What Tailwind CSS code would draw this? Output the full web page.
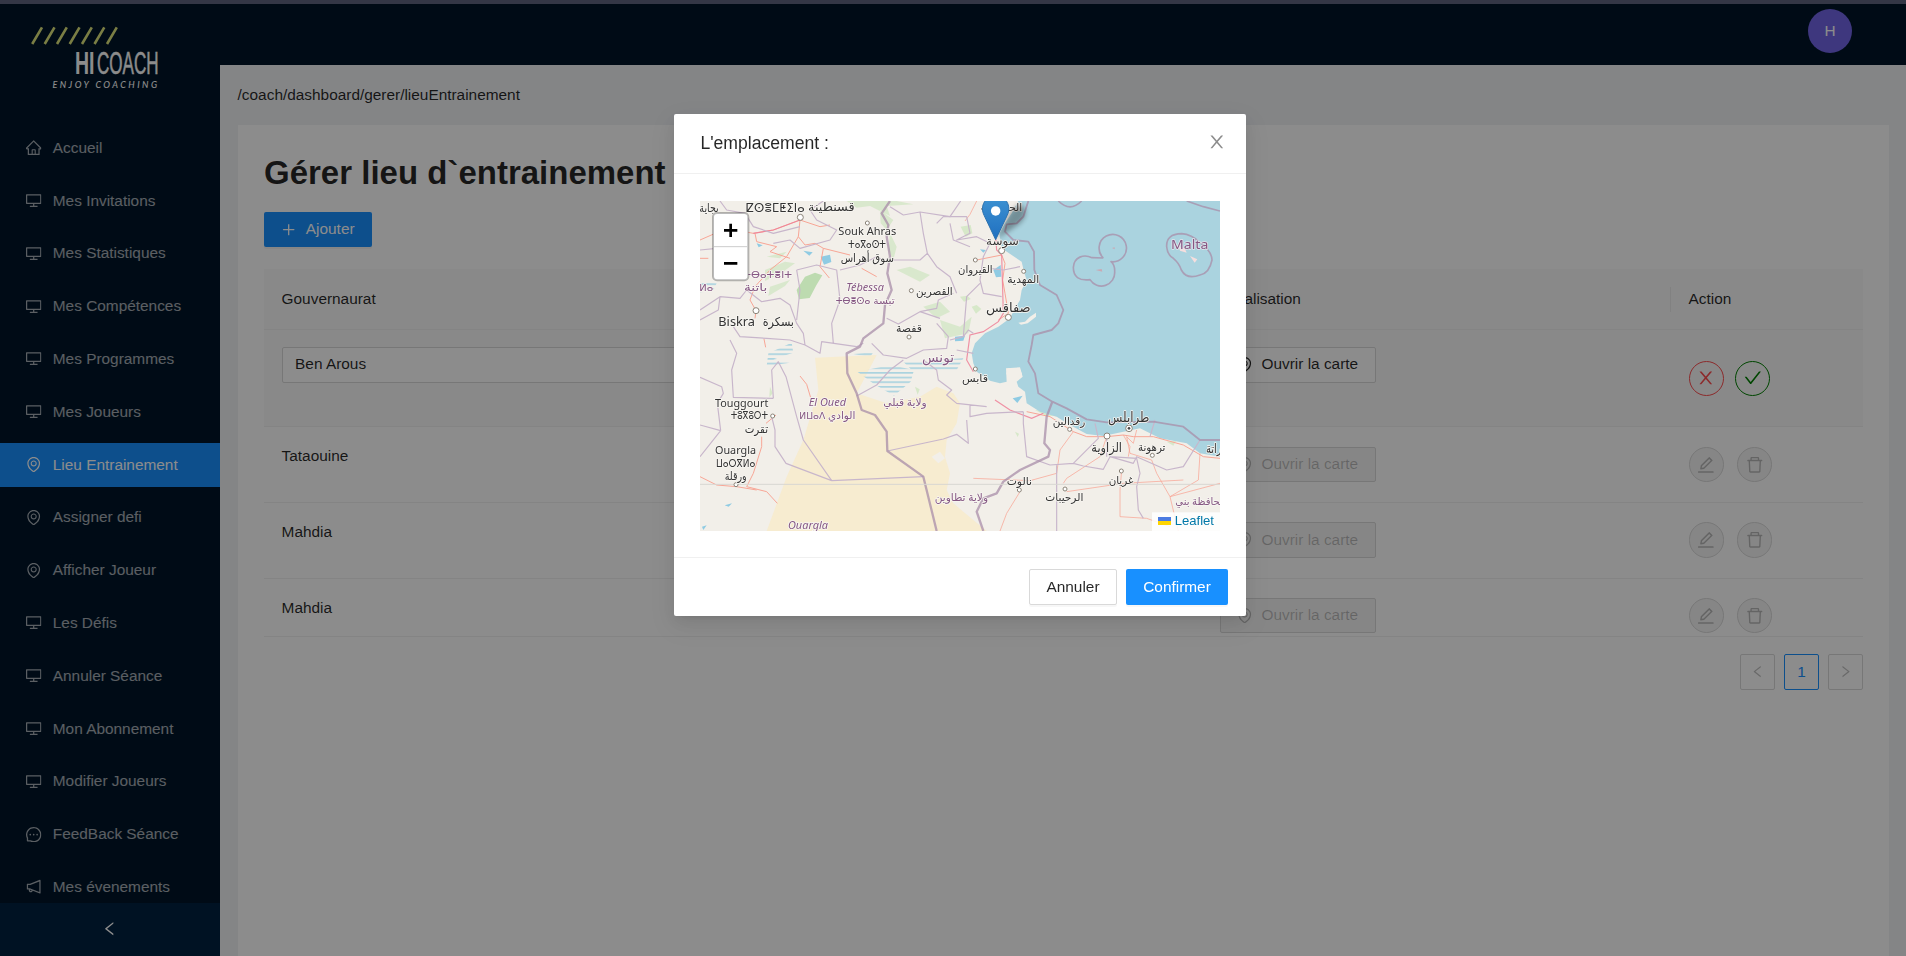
<!DOCTYPE html>
<html lang="fr">
<head>
<meta charset="utf-8">
<title>HiCoach</title>
<script src="https://cdn.jsdelivr.net/npm/@tailwindcss/browser@4"></script>
</head>
<body class="h-[956px] overflow-hidden bg-[#f0f2f5] font-['Liberation_Sans',Arial,sans-serif] text-[15.4px] leading-[24.2px] text-black/85">
<svg class="hidden">
  <symbol id="close" viewBox="64 64 896 896"><path d="M563.8 512l262.5-312.9c4.4-5.2.7-13.1-6.1-13.1h-79.8c-4.7 0-9.2 2.1-12.3 5.7L511.6 449.8 295.1 191.7c-3-3.6-7.5-5.7-12.3-5.7H203c-6.8 0-10.5 7.9-6.1 13.1L459.4 512 196.9 824.9A7.95 7.95 0 00203 838h79.8c4.7 0 9.2-2.1 12.3-5.7l216.5-258.1 216.5 258.1c3 3.6 7.5 5.7 12.3 5.7h79.8c6.8 0 10.5-7.9 6.1-13.1L563.8 512z"/></symbol>
  <symbol id="check" viewBox="64 64 896 896"><path d="M912 190h-69.9c-9.8 0-19.1 4.5-25.1 12.2L404.7 724.5 207 474a32 32 0 00-25.1-12.2H112c-6.7 0-10.4 7.7-6.3 12.9l273.9 347c12.8 16.2 37.4 16.2 50.3 0l488.4-618.9c4.1-5.1.4-12.8-6.3-12.8z"/></symbol>
  <symbol id="left" viewBox="64 64 896 896"><path d="M724 218.3V141c0-6.7-7.7-10.4-12.9-6.3L260.3 486.8a31.86 31.86 0 000 50.3l450.8 352.1c5.3 4.1 12.9.4 12.9-6.3v-77.3c0-4.9-2.3-9.6-6.1-12.6l-360-281 360-281.1c3.8-3 6.1-7.7 6.1-12.6z"/></symbol>
  <symbol id="right" viewBox="64 64 896 896"><path d="M765.7 486.8L314.9 134.7A7.97 7.97 0 00302 141v77.3c0 4.9 2.3 9.6 6.1 12.6l360 281.1-360 281.1c-3.9 3-6.1 7.7-6.1 12.6V883c0 6.7 7.7 10.4 12.9 6.3l450.8-352.1a31.96 31.96 0 000-50.4z"/></symbol>
  <symbol id="desktop" viewBox="64 64 896 896"><path d="M928 140H96c-17.7 0-32 14.3-32 32v496c0 17.7 14.3 32 32 32h380v112H304c-8.8 0-16 7.2-16 16v48c0 4.4 3.6 8 8 8h432c4.4 0 8-3.6 8-8v-48c0-8.8-7.2-16-16-16H548V700h380c17.7 0 32-14.3 32-32V172c0-17.7-14.3-32-32-32zm-40 488H136V212h752v416z"/></symbol>
  <symbol id="pin" viewBox="64 64 896 896"><path d="M854.6 289.1a362.49 362.49 0 00-79.9-115.7 370.83 370.83 0 00-118.2-77.8C610.7 76.6 562.1 67 512 67c-50.1 0-98.7 9.6-144.5 28.5-44.3 18.3-84 44.5-118.2 77.8A363.6 363.6 0 00169.4 289c-19.5 45-29.4 92.8-29.4 142 0 70.6 16.9 140.9 50.1 208.7 26.7 54.5 64 107.6 111 158.1 80.3 86.2 164.5 138.9 188.4 153a43.9 43.9 0 0022.4 6.1c7.8 0 15.5-2 22.4-6.1 23.9-14.1 108.1-66.8 188.4-153 47-50.4 84.3-103.6 111-158.1C867.1 572 884 501.8 884 431.1c0-49.2-9.9-97-29.4-142zM512 880.2c-65.9-41.9-300-207.8-300-449.1 0-77.9 31.1-151.1 87.6-206.3C356.3 169.5 431.7 139 512 139s155.7 30.5 212.4 85.9C780.9 280 812 353.2 812 431.1c0 241.3-234.1 407.2-300 449.1zm0-617.2c-97.2 0-176 78.8-176 176s78.8 176 176 176 176-78.8 176-176-78.8-176-176-176zm79.2 255.2A111.6 111.6 0 01512 551c-29.9 0-58-11.7-79.2-32.8A111.6 111.6 0 01400 439c0-29.9 11.7-58 32.8-79.2A111.6 111.6 0 01512 327c29.9 0 58 11.6 79.2 32.8A111.6 111.6 0 01624 439c0 29.9-11.7 58-32.8 79.2z"/></symbol>
  <symbol id="home" viewBox="64 64 896 896"><path d="M946.5 505L560.1 118.8l-25.9-25.9a31.5 31.5 0 00-44.4 0L77.5 505a63.9 63.9 0 00-18.8 46c.4 35.2 29.7 63.3 64.9 63.3h42.5V940h691.8V614.3h43.4c17.1 0 33.2-6.7 45.3-18.8a63.6 63.6 0 0018.7-45.3c0-17-6.7-33.1-18.8-45.2zM568 868H456V664h112v204zm217.9-325.7V868H632V640c0-22.1-17.9-40-40-40H432c-22.1 0-40 17.9-40 40v228H238.1V542.3h-96l370-369.7 23.1 23.1L882 542.3h-96.1z"/></symbol>
  <symbol id="message" viewBox="64 64 896 896"><path d="M464 512a48 48 0 1096 0 48 48 0 10-96 0zm200 0a48 48 0 1096 0 48 48 0 10-96 0zm-400 0a48 48 0 1096 0 48 48 0 10-96 0zm661.2-173.6c-22.6-53.7-55-101.9-96.3-143.3a444.35 444.35 0 00-143.3-96.3C630.6 75.7 572.2 64 512 64h-2c-60.6.3-119.3 12.3-174.5 35.9a445.35 445.35 0 00-142 96.5c-40.9 41.3-73 89.3-95.2 142.8-23 55.4-34.6 114.3-34.3 174.9A449.4 449.4 0 00112 714v152a46 46 0 0046 46h152.1A449.4 449.4 0 00510 960h2.1c59.9 0 118-11.6 172.7-34.3a444.48 444.48 0 00142.8-95.2c41.3-40.9 73.8-88.7 96.5-142 23.6-55.2 35.6-113.9 35.9-174.5.3-60.9-11.5-120-34.8-175.6zm-151.1 438C704 845.8 611 884 512 884h-1.7c-60.3-.3-120.2-15.3-173.1-43.5l-8.4-4.5H188V695.2l-4.5-8.4C155.3 633.9 140.3 574 140 513.7c-.4-99.7 37.7-193.3 107.6-263.8 69.8-70.5 163.1-109.5 262.8-109.9h1.7c50 0 98.5 9.7 144.2 28.9 44.6 18.7 84.6 45.6 119 80 34.3 34.3 61.3 74.4 80 119 19.4 46.2 29.1 95.2 28.9 145.8-.6 99.6-39.7 192.9-110.1 262.7z"/></symbol>
  <symbol id="horn" viewBox="64 64 896 896"><path d="M880 112c-3.8 0-7.7.7-11.6 2.3L292 345.9H128c-8.8 0-16 7.4-16 16.6v299c0 9.2 7.2 16.6 16 16.6h101.7c-3.7 11.6-5.7 23.9-5.7 36.4 0 65.9 53.8 119.5 120 119.5 55.4 0 102.1-37.6 115.9-88.4l408.6 164.2c3.9 1.5 7.8 2.3 11.6 2.3 16.9 0 32-14.2 32-33.2V145.2C912 126.2 897 112 880 112zM344 762.3c-26.5 0-48-21.4-48-47.8 0-11.2 3.9-21.9 11-30.4l84.9 34.1c-2 24.6-22.7 44.1-47.9 44.1zm496 58.4L318.8 611.3l-12.9-5.2H184V417.9h121.9l12.9-5.2L840 203.3v617.4z"/></symbol>
  <symbol id="plus" viewBox="64 64 896 896"><path d="M482 192h60q8 0 8 8v624q0 8-8 8h-60q-8 0-8-8V200q0-8 8-8z"/><path d="M200 474h624q8 0 8 8v60q0 8-8 8H200q-8 0-8-8v-60q0-8 8-8z"/></symbol>
  <symbol id="edit" viewBox="64 64 896 896"><path d="M257.7 752c2 0 4-.2 6-.5L431.9 722c2-.4 3.9-1.3 5.3-2.8l423.9-423.9a9.96 9.96 0 000-14.1L694.9 114.9c-1.9-1.9-4.4-2.9-7.1-2.9s-5.2 1-7.1 2.9L256.8 538.8c-1.5 1.5-2.4 3.3-2.8 5.3l-29.5 168.2a33.5 33.5 0 009.4 29.8c6.6 6.4 14.9 9.9 23.8 9.9zm67.4-174.4L687.8 215l73.3 73.3-362.7 362.6-88.9 15.7 15.6-89zM880 836H144c-17.7 0-32 14.3-32 32v36c0 4.4 3.6 8 8 8h784c4.4 0 8-3.6 8-8v-36c0-17.7-14.3-32-32-32z"/></symbol>
  <symbol id="trash" viewBox="64 64 896 896"><path d="M360 184h-8c4.4 0 8-3.6 8-8v8h304v-8c0 4.4 3.6 8 8 8h-8v72h72v-80c0-35.3-28.7-64-64-64H352c-35.3 0-64 28.7-64 64v80h72v-72zm504 72H160c-17.7 0-32 14.3-32 32v32c0 4.4 3.6 8 8 8h60.4l24.7 523c1.6 34.1 29.8 61 63.9 61h454c34.2 0 62.3-26.8 63.9-61l24.7-523H888c4.4 0 8-3.6 8-8v-32c0-17.7-14.3-32-32-32zM731.3 840H292.7l-24.2-512h487l-24.2 512z"/></symbol>
</svg>

<div class="flex h-full">
  <!-- Sidebar -->
  <aside class="flex w-[220px] shrink-0 flex-col bg-[#001529] text-white/65">
    <svg class="h-[122px] w-[220px] shrink-0" viewBox="0 0 220 122">
      <g stroke="#dfe67d" stroke-width="2.6"><path d="M32.2 44L42 27.3M44.7 44L54.5 27.3M57 44L66.8 27.3M69.7 44L79.5 27.3M82 44L91.8 27.3M94.5 44L104.3 27.3M107 44L116.8 27.3"/></g>
      <g fill="#fff" font-family="'Liberation Sans Narrow','Liberation Sans',sans-serif">
        <text x="75" y="73.5" font-size="31" font-weight="700" textLength="19.5" lengthAdjust="spacingAndGlyphs">HI</text>
        <text x="97" y="73.5" font-size="31" stroke="#fff" stroke-width=".5" textLength="61.5" lengthAdjust="spacingAndGlyphs">COACH</text>
      </g>
      <text x="52.5" y="87.6" fill="#fff" font-family="Lato,sans-serif" font-weight="500" font-style="italic" font-size="9" textLength="104.5" lengthAdjust="spacing">ENJOY COACHING</text>
    </svg>
    <nav class="flex min-h-0 flex-1 flex-col gap-[8.8px] overflow-hidden pt-[3.9px] *:flex *:h-[44px] *:shrink-0 *:items-center *:gap-[11px] *:pl-[26.4px] [&_svg]:size-[15.4px] [&_svg]:fill-current">
      <a><svg><use href="#home"/></svg>Accueil</a>
      <a><svg><use href="#desktop"/></svg>Mes Invitations</a>
      <a><svg><use href="#desktop"/></svg>Mes Statistiques</a>
      <a><svg><use href="#desktop"/></svg>Mes Compétences</a>
      <a><svg><use href="#desktop"/></svg>Mes Programmes</a>
      <a><svg><use href="#desktop"/></svg>Mes Joueurs</a>
      <a class="bg-[#1890ff] text-white"><svg><use href="#pin"/></svg>Lieu Entrainement</a>
      <a><svg><use href="#pin"/></svg>Assigner defi</a>
      <a><svg><use href="#pin"/></svg>Afficher Joueur</a>
      <a><svg><use href="#desktop"/></svg>Les Défis</a>
      <a><svg><use href="#desktop"/></svg>Annuler Séance</a>
      <a><svg><use href="#desktop"/></svg>Mon Abonnement</a>
      <a><svg><use href="#desktop"/></svg>Modifier Joueurs</a>
      <a><svg><use href="#message"/></svg>FeedBack Séance</a>
      <a><svg><use href="#horn"/></svg>Mes évenements</a>
    </nav>
    <div class="flex h-[53px] shrink-0 items-center justify-center bg-[#002140] pb-[2px] text-white"><svg class="size-[15.4px] fill-current"><use href="#left"/></svg></div>
  </aside>

  <div class="flex min-w-0 flex-1 flex-col">
    <header class="flex h-[65px] shrink-0 justify-end bg-[#001529] pt-[9px] pr-[54px]">
      <div class="flex size-[44px] items-center justify-center rounded-full bg-[#7265e6] text-white">H</div>
    </header>
    <div class="flex h-[60px] shrink-0 items-center pl-[17.6px]">/coach/dashboard/gerer/lieuEntrainement</div>
    <main class="mr-[17px] ml-[18px] flex-1 bg-white px-[26px] pt-[26px]">
      <h1 class="text-[33px] leading-[44px] font-bold">Gérer lieu d`entrainement</h1>
      <button class="mt-[17px] flex h-[35px] w-[108px] items-center justify-center gap-[9px] rounded-[2px] bg-[#1890ff] text-white shadow-[0_2px_0_rgba(0,0,0,0.045)]"><svg class="size-[15.4px] fill-current"><use href="#plus"/></svg>Ajouter</button>

      <div class="mt-[22px]">
        <div class="grid h-[60.5px] grid-cols-[938px_468px_194px] items-center border-b border-[#f0f0f0] bg-[#fafafa]">
          <div class="pl-[17.6px]">Gouvernaurat</div>
          <div class="pl-[17.6px]">Localisation</div>
          <div class="relative pl-[18.6px] before:absolute before:top-0 before:left-0 before:h-[25px] before:w-px before:bg-black/6">Action</div>
        </div>
        <div class="grid h-[97px] grid-cols-[938px_468px_194px] border-b border-[#f0f0f0] bg-[#fafafa] pt-[17px]">
          <div class="px-[17.6px]"><div class="flex h-[36px] items-center rounded-[2px] border border-[#d9d9d9] bg-white pl-[12.5px]">Ben Arous</div></div>
          <div class="pl-[17.6px]"><button class="flex h-[36px] w-[156px] items-center justify-center gap-[9px] rounded-[2px] border border-[#d9d9d9] bg-white"><svg class="size-[15.4px] fill-current"><use href="#pin"/></svg>Ouvrir la carte</button></div>
          <div class="flex gap-[11px] pt-[14px] pl-[18.6px]">
            <button class="flex size-[35.2px] items-center justify-center rounded-full border border-[#ff4d4f] text-[#ff4d4f]"><svg class="size-[17.6px] fill-current"><use href="#close"/></svg></button>
            <button class="flex size-[35.2px] items-center justify-center rounded-full border border-[#008000] text-[#008000]"><svg class="size-[17.6px] fill-current"><use href="#check"/></svg></button>
          </div>
        </div>
        <div class="grid h-[76px] grid-cols-[938px_468px_194px] border-b border-[#f0f0f0] pt-[17.6px]">
          <div class="pl-[17.6px]">Tataouine</div>
          <div class="pt-[3px] pl-[17.6px]"><button class="flex h-[35px] w-[156px] items-center justify-center gap-[9px] rounded-[2px] border border-[#d9d9d9] bg-[#f5f5f5] text-black/25"><svg class="size-[15.4px] fill-current"><use href="#pin"/></svg>Ouvrir la carte</button></div>
          <div class="flex gap-[13px] pt-[3px] pl-[18.6px] text-black/25">
            <button class="flex size-[35.2px] items-center justify-center rounded-full border border-[#d9d9d9] bg-[#f5f5f5]"><svg class="size-[17.6px] fill-current"><use href="#edit"/></svg></button>
            <button class="flex size-[35.2px] items-center justify-center rounded-full border border-[#d9d9d9] bg-[#f5f5f5]"><svg class="size-[17.6px] fill-current"><use href="#trash"/></svg></button>
          </div>
        </div>
        <div class="grid h-[76px] grid-cols-[938px_468px_194px] border-b border-[#f0f0f0] pt-[17.6px]">
          <div class="pl-[17.6px]">Mahdia</div>
          <div class="pt-[2px] pl-[17.6px]"><button class="flex h-[36px] w-[156px] items-center justify-center gap-[9px] rounded-[2px] border border-[#d9d9d9] bg-[#f5f5f5] text-black/25"><svg class="size-[15.4px] fill-current"><use href="#pin"/></svg>Ouvrir la carte</button></div>
          <div class="flex gap-[13px] pt-[2.4px] pl-[18.6px] text-black/25">
            <button class="flex size-[35.2px] items-center justify-center rounded-full border border-[#d9d9d9] bg-[#f5f5f5]"><svg class="size-[17.6px] fill-current"><use href="#edit"/></svg></button>
            <button class="flex size-[35.2px] items-center justify-center rounded-full border border-[#d9d9d9] bg-[#f5f5f5]"><svg class="size-[17.6px] fill-current"><use href="#trash"/></svg></button>
          </div>
        </div>
        <div class="grid h-[58px] grid-cols-[938px_468px_194px] border-b border-[#f0f0f0] pt-[17.6px]">
          <div class="pl-[17.6px]">Mahdia</div>
          <div class="pt-[2px] pl-[17.6px]"><button class="flex h-[35px] w-[156px] items-center justify-center gap-[9px] rounded-[2px] border border-[#d9d9d9] bg-[#f5f5f5] text-black/25"><svg class="size-[15.4px] fill-current"><use href="#pin"/></svg>Ouvrir la carte</button></div>
          <div class="flex gap-[13px] pt-[2px] pl-[18.6px] text-black/25">
            <button class="flex size-[35.2px] items-center justify-center rounded-full border border-[#d9d9d9] bg-[#f5f5f5]"><svg class="size-[17.6px] fill-current"><use href="#edit"/></svg></button>
            <button class="flex size-[35.2px] items-center justify-center rounded-full border border-[#d9d9d9] bg-[#f5f5f5]"><svg class="size-[17.6px] fill-current"><use href="#trash"/></svg></button>
          </div>
        </div>
      </div>
      <div class="mt-[17.5px] flex justify-end gap-[9px] *:flex *:h-[36px] *:w-[35px] *:items-center *:justify-center *:rounded-[2px] *:border">
        <button class="border-[#d9d9d9] text-black/25"><svg class="size-[13.2px] fill-current"><use href="#left"/></svg></button>
        <button class="border-[#1890ff] text-[#1890ff]">1</button>
        <button class="border-[#d9d9d9] text-black/25"><svg class="size-[13.2px] fill-current"><use href="#right"/></svg></button>
      </div>
    </main>
  </div>
</div>

<!-- Mask and dialog -->
<div class="fixed inset-0 flex items-start justify-center bg-black/45 pt-[114px] pl-[14px]">
  <section class="flex h-[501.6px] w-[572px] flex-col rounded-[2px] bg-white shadow-[0_3px_6px_-4px_rgba(0,0,0,0.12),0_6px_16px_0_rgba(0,0,0,0.08),0_9px_28px_8px_rgba(0,0,0,0.05)]">
    <div class="flex h-[60px] shrink-0 items-center justify-between border-b border-[#f0f0f0] pr-[20px] pl-[26.4px]">
      <h2 class="text-[17.6px]">L'emplacement :</h2>
      <svg class="mb-[3px] size-[17.6px] fill-black/45"><use href="#close"/></svg>
    </div>
    <div class="flex-1 px-[26px] pt-[27px]">
      <svg class="h-[330px] w-[520px]" viewBox="30 33 1560 990">
        <defs>
          <linearGradient id="mk" x1="0" y1="0" x2="0" y2="1"><stop offset="0" stop-color="#3e93d2"/><stop offset="1" stop-color="#1f6fc0"/></linearGradient>
          <filter id="soft" x="-50%" y="-50%" width="200%" height="200%"><feGaussianBlur stdDeviation="8"/></filter>
          <pattern id="salt" width="20" height="14" patternUnits="userSpaceOnUse"><rect width="20" height="5" fill="#aad3df"/></pattern>
        </defs>
        <rect x="30" y="33" width="1560" height="990" fill="#f2efe9"/>
        <!-- sand -->
        <path d="M375 503L560 495 500 610 590 640 690 620 740 590 790 610 810 640 800 700 770 750 765 800 780 850 770 900 790 940 820 965 890 1023H230L290 860 340 750 385 600z" fill="#f7ecd0"/>
        <path d="M725 800l25-15 15 20-20 15z" fill="#f2efe9"/>
        <!-- vegetation -->
        <g fill="#cfe6c0">
          <path d="M320 300l25-40 30-12 22 8-18 30-20 38-32 4z" fill="#bddbb0"/>
          <path d="M470 33l30 20 40-5 60 30-10-30 80-5-60-12zM570 60l40 30-20 30-18-20zM225 240l60-25 30 5-40 28-50 25zM230 200l60-15-20 20zM700 350l50-15 30 30-40 20zM750 390l60 20 35-30-10 50-70 15zM620 240l40-10 60 25-30 20zM240 290l60-20-15 18-50 30zM600 130l20 40-10 40-15-30z" opacity=".7"/>
          <path d="M845 350l15-5 14 12-16 14zM812 110l30-5 5 25-20 10zM810 320l22-3 10 10-20 8zM675 590l14 8-6 16zM1430 755l28-2-8 14zM975 725l12 6-4 10zM1035 660l50 6 30 14-50-4zM240 590l8 20-10 12z" opacity=".8"/>
        </g>
        <!-- salt lakes -->
        <path d="M235 490l70-32 5 30-60 20 50 10-70 10zM502 545l100-20 70 15-10 35-50 42-60-35zM490 492l60-5-10 14zM640 515l180-10-20 35-130 5zM30 277l50 3-10 20-40 8z" fill="url(#salt)"/>
        <g fill="#8fcbe3"><path d="M392 200l28-6 4 22-22 8zM340 182l28 5-10 10zM200 160l18 6-12 6zM795 440l30-3-5 15-25 2zM870 178l18 2-8 8zM104 946l22-6-10 10zM36 1010l14-4-10 14zM968 625l30-8-16 22zM910 240l22-15 2 35-16 2z"/></g>
        <!-- sea -->
        <path d="M985 33L965 70 945 100 928 130 935 175 965 195 995 215 1002 245 1010 270 995 300 990 330 975 355 960 385 925 410 885 430 855 460 845 490 850 520 860 545 900 572 930 580 950 575 948 535 990 532 998 560 980 575 985 590 1005 605 1010 640 1050 665 1100 680 1140 705 1190 732 1240 738 1300 725 1350 715 1410 745 1490 760 1530 790 1590 800V33z" fill="#aad3df"/>
        <path d="M953 535l35-1 8 18-22 14-6 14-10-18-9-10z" fill="#f2efe9"/>
        <path d="M985 398l20-3 15-15 18-12v12l-25 20-20 4z" fill="#f2efe9"/>
        <g fill="#f5dede"><path d="M1466 170l18 4 6 14-20-6zM1500 198l22 10-8 10z"/></g>
        <path d="M1217 240l18-3 2 8zM1266 174l8-2v6z" fill="#c9a9b4"/>
        <!-- roads -->
        <g fill="none" stroke="#f8a696" stroke-width="3">
          <path d="M330 90L250 120 190 130 110 115 30 150M330 90L325 140 290 200 240 240 195 290 180 330 198 362 195 385M325 140L345 165 375 160 400 175 480 195M400 175L390 230 418 264M195 130L200 155 260 170 240 185 300 205M330 90l60 20 30-5M515 235l45 25M30 205h25M222 447l5 25M330 558l20 25 12 40M228 700l30-25M215 740L215 770 190 850 170 890 230 905 262 940M30 860L80 885 140 890 200 900M935 195L945 220 938 270 945 310 955 370 925 390M935 195L850 212M1590 805L1540 800 1480 765 1390 740 1330 740 1300 735 1250 740 1190 740 1150 725 1080 680 1010 665"/>
          <path d="M1150 725L1110 780 1100 850 1020 872 850 865M1250 740L1230 800 1130 865 1120 880M1310 740L1320 790 1385 810 1400 850 1440 920 1465 1023M1530 790L1525 870 1440 920M1440 920L1590 880M990 905L950 970 930 1023M1130 905L1300 880 1480 870M1295 840L1290 900 1290 980 1370 985 1440 1010M1300 735L1320 770 1315 800M1340 720l-10 40-20-20M860 33l-20 40-15 20" opacity=".75"/>
        </g>
        <g fill="none" stroke="#ee7f96" stroke-width="3.5" opacity=".85"><path d="M915 120L920 180 935 195 938 300 940 370 925 395 880 425 840 435 830 510 850 545M915 630L960 660 1025 685 1060 670M330 90L250 120 190 130"/></g>
        <!-- administrative limits -->
        <g fill="none" stroke="#c8b6cb" stroke-width="3.5" stroke-linejoin="round">
          <path d="M30 180L80 175 100 200M90 33L110 60 165 70 190 110 250 130 330 110M250 160L300 150 330 175 420 150 440 120 380 90 360 60 400 33M30 360L90 320 150 325 170 300 215 335 270 325 300 345 320 400 340 430 345 465 390 490 395 455 500 470 520 460M320 240L330 300 320 390M320 240L380 225 440 240 450 330 425 400 430 460M450 240L510 225 560 200 590 215M90 320L85 360 30 390M130 410L150 440 230 445 300 450 345 465M120 450L140 490 125 540 130 622 250 625M600 50L640 75 690 66 700 130 712 190 690 210 600 210M690 66L780 80 812 33M712 190L740 230 780 260 800 310M590 385L625 402 690 365 740 355 745 330 790 310M545 460L580 495 650 505 700 480 770 475 775 440 740 400M690 365L750 385"/>
          <path d="M740 100L760 80 830 80 840 130 800 150 860 140 900 160 880 200 870 270 880 310 935 320M780 100L790 150 840 170M900 235L940 240 990 230M870 280L830 320 820 440 780 450M820 440L835 420 850 430M800 480L850 490"/>
          <path d="M500 618L560 585 600 540 640 510M700 510L740 540 745 570 785 600 770 615 800 640 890 650M840 645V680L890 670 1000 665M592 783L760 747 800 733 835 760 830 690M425 872L340 750 320 680 288 560 265 515 245 540 250 625M425 872L288 820 255 770V720L245 680M425 872L700 860M92 722L30 800M92 722L30 705M92 722L82 640 100 610 95 590 30 562M1000 665L1000 700 1010 800 1080 825 1150 820 1225 745 1215 700M1150 820L1180 828 1240 838 1260 800 1330 820 1340 800 1430 840 1480 830 1530 750M1260 800L1340 805 1350 850 1340 890 1345 960 1360 985M1100 825L1100 1023M1250 735V800M1380 740l15-50"/>
        </g>
        <!-- country and maritime borders -->
        <g fill="none" stroke="#a98ea9" stroke-width="7" stroke-linejoin="round" opacity=".75">
          <path d="M600 33L575 70 595 105 590 140 600 200 592 250 605 300 585 345 580 400 520 445 510 470 470 490 472 550 500 610 515 660 555 675 590 725 592 783 700 860 740 1023M1087 635L1070 680 1063 760 1080 780 1075 800 990 840 940 875 920 910 880 925 860 965 880 1023"/>
          <path d="M1015 33L1000 80 980 100 950 103 945 125 970 150 1015 155 1032 185 1033 240 1050 285 1100 315 1120 360 1105 400 1085 420 1030 435 1025 465 1015 515 1035 550 1045 610 1087 635 1130 655 1190 688 1250 697 1390 695 1480 710 1530 750H1590" stroke-width="5.5"/>
          <path d="M1105 33Q1140 68 1175 33M1490 33L1540 50 1590 63M1240 204A41 41 0 1 1 1263 215Q1275 225 1274 245A40 40 0 0 1 1200 269Q1150 275 1150 232C1152 200 1182 192 1206 203Q1225 203 1240 204M1430 170Q1428 132 1475 131 1505 133 1530 158 1566 185 1566 210 1558 250 1530 255 1490 270 1474 240 1468 220 1450 205 1432 195 1430 170" stroke-width="5"/>
        </g>
        <path d="M30 883H1590" stroke="#d8d6d2" stroke-width="3"/>
        <!-- towns -->
        <g fill="#fff" stroke="#8b8479" stroke-width="3"><circle cx="331" cy="82" r="9"/><circle cx="532" cy="99" r="6"/><circle cx="198" cy="362" r="9"/><circle cx="664" cy="302" r="6"/><circle cx="657" cy="441" r="6"/><circle cx="935" cy="182" r="9"/><circle cx="856" cy="210" r="6"/><circle cx="1001" cy="244" r="6"/><circle cx="955" cy="382" r="9"/><circle cx="248" cy="678" r="6"/><circle cx="138" cy="884" r="6"/><circle cx="856" cy="537" r="6"/><circle cx="1139" cy="718" r="6"/><circle cx="1251" cy="738" r="9"/><circle cx="1317" cy="715" r="10"/><circle cx="1387" cy="796" r="6"/><circle cx="1294" cy="843" r="6"/><circle cx="1125" cy="897" r="6"/><circle cx="988" cy="900" r="6"/></g>
        <circle cx="1317" cy="715" r="4" fill="#444"/>
        <g font-family="'Noto Sans','DejaVu Sans',sans-serif" font-size="37" fill="#333" stroke="#f8f6f2" stroke-width="5" paint-order="stroke" stroke-linejoin="round">
          <text x="28" y="66" font-size="34" textLength="58" lengthAdjust="spacingAndGlyphs">بجاية</text>
          <text x="168" y="66" textLength="176" lengthAdjust="spacingAndGlyphs">ⵇⵙⴻⵎⵟⵉⵏⴰ</text>
          <text x="354" y="63" textLength="140" lengthAdjust="spacingAndGlyphs">قسنطينة</text>
          <text x="445" y="136" font-size="32" textLength="174" lengthAdjust="spacingAndGlyphs">Souk Ahras</text>
          <text x="474" y="175" font-size="34" textLength="114" lengthAdjust="spacingAndGlyphs">ⵜⴰⴳⴰⵙⵜ</text>
          <text x="452" y="215" font-size="34" textLength="160" lengthAdjust="spacingAndGlyphs">سوق أهراس</text>
          <text x="85" y="408" font-size="36" textLength="110" lengthAdjust="spacingAndGlyphs">Biskra</text>
          <text x="218" y="407" textLength="94" lengthAdjust="spacingAndGlyphs">بسكرة</text>
          <text x="678" y="315" font-size="32" textLength="110" lengthAdjust="spacingAndGlyphs">القصرين</text>
          <text x="618" y="426" font-size="32" textLength="78" lengthAdjust="spacingAndGlyphs">قفصة</text>
          <text x="872" y="62" font-size="32" textLength="125" lengthAdjust="spacingAndGlyphs">الحمامات</text>
          <text x="888" y="165" textLength="98" lengthAdjust="spacingAndGlyphs">سوسة</text>
          <text x="804" y="250" font-size="32" textLength="104" lengthAdjust="spacingAndGlyphs">القيروان</text>
          <text x="952" y="280" font-size="32" textLength="96" lengthAdjust="spacingAndGlyphs">المهدية</text>
          <text x="888" y="365" font-size="38" textLength="134" lengthAdjust="spacingAndGlyphs">صفاقس</text>
          <text x="816" y="577" font-size="32" textLength="78" lengthAdjust="spacingAndGlyphs">قابس</text>
          <text x="75" y="650" font-size="31" textLength="160" lengthAdjust="spacingAndGlyphs">Touggourt</text>
          <text x="122" y="688" font-size="34" textLength="112" lengthAdjust="spacingAndGlyphs">ⵜⵓⴳⵓⵔⵜ</text>
          <text x="164" y="728" font-size="34" textLength="70" lengthAdjust="spacingAndGlyphs">تقرت</text>
          <text x="75" y="792" font-size="31" textLength="123" lengthAdjust="spacingAndGlyphs">Ouargla</text>
          <text x="78" y="831" font-size="34" textLength="118" lengthAdjust="spacingAndGlyphs">ⵡⴰⵔⴳⵍⴰ</text>
          <text x="104" y="870" font-size="34" textLength="66" lengthAdjust="spacingAndGlyphs">ورقلة</text>
          <text x="1088" y="705" font-size="32" textLength="98" lengthAdjust="spacingAndGlyphs">رقدالين</text>
          <text x="1254" y="696" font-size="42" textLength="124" lengthAdjust="spacingAndGlyphs">طرابلس</text>
          <text x="1204" y="785" font-size="38" textLength="92" lengthAdjust="spacingAndGlyphs">الزاوية</text>
          <text x="1344" y="783" font-size="33" textLength="82" lengthAdjust="spacingAndGlyphs">ترهونة</text>
          <text x="1548" y="789" font-size="38" textLength="90" lengthAdjust="spacingAndGlyphs">مصراتة</text>
          <text x="1256" y="882" font-size="33" textLength="74" lengthAdjust="spacingAndGlyphs">غريان</text>
          <text x="950" y="884" font-size="33" textLength="76" lengthAdjust="spacingAndGlyphs">نالوت</text>
          <text x="1066" y="933" font-size="33" textLength="114" lengthAdjust="spacingAndGlyphs">الرحيبات</text>
          <g fill="#855783">
            <text x="160" y="265" font-size="30" textLength="146" lengthAdjust="spacingAndGlyphs">ⵜⴱⴰⵜⴻⵏⵜ</text>
            <text x="162" y="303" font-size="32" textLength="70" lengthAdjust="spacingAndGlyphs">باتنة</text>
            <text x="28" y="304" font-size="30">ⵍⴰ</text>
            <text x="469" y="304" font-size="31" font-style="italic" textLength="113" lengthAdjust="spacingAndGlyphs">Tébessa</text>
            <text x="437" y="342" font-size="30" textLength="104" lengthAdjust="spacingAndGlyphs">ⵜⴱⴻⵙⴰ</text>
            <text x="550" y="341" font-size="31" textLength="64" lengthAdjust="spacingAndGlyphs">تبسة</text>
            <text x="696" y="515" font-size="40" textLength="96" lengthAdjust="spacingAndGlyphs">تونس</text>
            <text x="356" y="649" font-size="30" font-style="italic" textLength="112" lengthAdjust="spacingAndGlyphs">El Oued</text>
            <text x="328" y="688" font-size="30" textLength="78" lengthAdjust="spacingAndGlyphs">ⵍⵡⴰⴷ</text>
            <text x="414" y="688" font-size="32" textLength="82" lengthAdjust="spacingAndGlyphs">الوادي</text>
            <text x="580" y="647" font-size="32" textLength="130" lengthAdjust="spacingAndGlyphs">ولاية قبلي</text>
            <text x="734" y="933" font-size="32" textLength="160" lengthAdjust="spacingAndGlyphs">ولاية تطاوين</text>
            <text x="294" y="1018" font-size="30" font-style="italic" textLength="120" lengthAdjust="spacingAndGlyphs">Ouargla</text>
            <text x="1456" y="944" font-size="32" textLength="150" lengthAdjust="spacingAndGlyphs">محافظة بني</text>
            <text x="1443" y="176" font-size="37" textLength="112" lengthAdjust="spacingAndGlyphs" stroke="#e4e4ea" stroke-width="4">Malta</text>
          </g>
        </g>
        <!-- marker -->
        <path d="M920 148L955 75q30-45 50-20 8 30-25 52z" fill="#000" opacity=".32" filter="url(#soft)"/>
        <g transform="translate(875.7 15) scale(3.3)"><path d="M12.5.5C5.9.5.5 5.9.5 12.5c0 2.1.6 4.2 1.5 6L12.5 40.6 23 18.5c.9-1.8 1.5-3.9 1.5-6C24.5 5.9 19.1.5 12.5.5z" fill="url(#mk)" stroke="#2b70ad" stroke-width=".9"/><circle cx="12.5" cy="14.5" r="4.3" fill="#fff"/></g>
        <!-- zoom control -->
        <rect x="69" y="69" width="106" height="202" rx="12" fill="#fff" stroke="#000" stroke-opacity=".27" stroke-width="6"/>
        <path d="M72 170H172" stroke="#ccc" stroke-width="3"/>
        <path d="M102 121H142M122 101V141M102 220H142" stroke="#000" stroke-width="8"/>
        <!-- attribution -->
        <rect x="1386" y="967" width="204" height="56" fill="#fff" fill-opacity=".85"/>
        <path d="M1404 981h39v12h-39z" fill="#4c7be1"/><path d="M1404 993h39v12h-39z" fill="#ffd500"/>
        <text x="1454" y="1005" fill="#0078a8" font-family="'Liberation Sans',sans-serif" font-size="39.6" textLength="118" lengthAdjust="spacingAndGlyphs">Leaflet</text>
      </svg>
    </div>
    <div class="flex h-[58.6px] shrink-0 items-center justify-end gap-[9px] border-t border-[#f0f0f0] pr-[18px] *:flex *:h-[36px] *:items-center *:justify-center *:rounded-[2px] *:shadow-[0_2px_0_rgba(0,0,0,0.03)]">
      <button class="w-[88px] border border-[#d9d9d9]">Annuler</button>
      <button class="w-[102px] bg-[#1890ff] text-white">Confirmer</button>
    </div>
  </section>
  <div class="absolute inset-x-0 top-0 h-1 bg-[#343746]"></div>
</div>
</body>
</html>
